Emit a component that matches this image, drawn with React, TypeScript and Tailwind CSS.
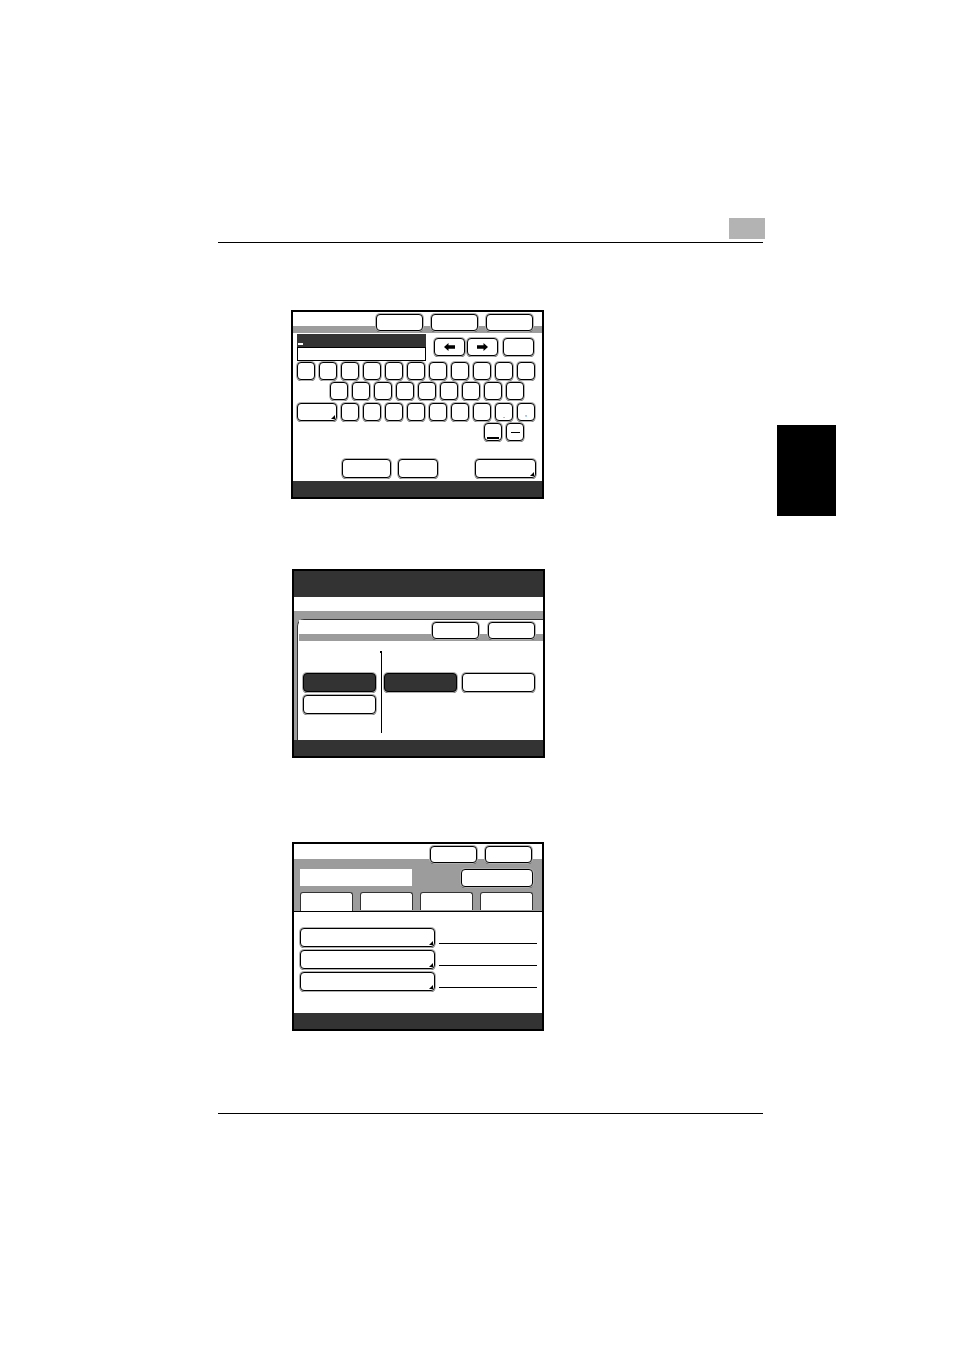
import React from "react";

type BtnProps = {
  className?: string;
  dark?: boolean;
  corner?: boolean;
  children?: React.ReactNode;
};

function Btn({ className = "", dark = false, corner = false, children }: BtnProps) {
  return (
    <div
      className={
        "relative flex shrink-0 items-center justify-center rounded-[4px] border border-black shadow-[0_1px_0_0_#000] ring-1 ring-[#b0b0b0] " +
        (dark ? "bg-[#333333] " : "bg-white ") +
        className
      }
    >
      {children}
      {corner && (
        <span className="absolute bottom-[1px] right-[1px] h-0 w-0 border-b-[4px] border-l-[4px] border-b-black border-l-transparent" />
      )}
    </div>
  );
}

function Key({ children, className = "w-[18px]" }: { children?: React.ReactNode; className?: string }) {
  return <Btn className={"h-[18px] " + className}>{children}</Btn>;
}

function Arrow({ dir }: { dir: "left" | "right" }) {
  return (
    <svg width="11" height="8" viewBox="0 0 11 8">
      {dir === "left" ? (
        <polygon points="0,4 4.5,0 4.5,2.2 11,2.2 11,5.8 4.5,5.8 4.5,8" fill="#000" />
      ) : (
        <polygon points="11,4 6.5,0 6.5,2.2 0,2.2 0,5.8 6.5,5.8 6.5,8" fill="#000" />
      )}
    </svg>
  );
}

function ScreenKeyboard() {
  return (
    <div className="ml-[291px] mt-[67px] flex h-[189px] w-[253px] flex-col border-2 border-black bg-white">
      <div className="flex h-[21px] items-start justify-end gap-[8px] bg-[linear-gradient(to_bottom,#ffffff_14px,#9c9c9c_14px)] pr-[9px] pt-[2px]">
        <Btn className="h-[17px] w-[47px]" />
        <Btn className="h-[17px] w-[47px]" />
        <Btn className="h-[17px] w-[47px]" />
      </div>
      <div className="mt-[1px] flex items-start">
        <div className="ml-[4px] flex w-[129px] flex-col">
          <div className="flex h-[13px] items-end bg-[#333333] pb-[2px] pl-[1px]">
            <div className="h-[2px] w-[5px] bg-white" />
          </div>
          <div className="h-[14px] border border-black bg-white" />
        </div>
        <div className="ml-[8px] mt-[4px] flex">
          <Btn className="h-[18px] w-[31px]">
            <Arrow dir="left" />
          </Btn>
          <Btn className="ml-[2px] h-[18px] w-[31px]">
            <Arrow dir="right" />
          </Btn>
          <Btn className="ml-[5px] h-[18px] w-[31px]" />
        </div>
      </div>
      <div className="mt-[1px] flex gap-[4px] pl-[4px]">
        {Array.from({ length: 11 }).map((_, i) => (
          <Key key={i} />
        ))}
      </div>
      <div className="mt-[2px] flex gap-[4px] pl-[37px]">
        {Array.from({ length: 9 }).map((_, i) => (
          <Key key={i} />
        ))}
      </div>
      <div className="mt-[3px] flex gap-[4px] pl-[4px]">
        <Btn className="h-[18px] w-[40px]" corner />
        {Array.from({ length: 7 }).map((_, i) => (
          <Key key={i} />
        ))}
        <Key>
          <span className="mt-[6px] font-['Liberation_Sans',sans-serif] text-[7px] leading-none">.</span>
        </Key>
        <Key>
          <span className="mt-[3px] font-['Liberation_Sans',sans-serif] text-[7px] leading-none">,</span>
        </Key>
      </div>
      <div className="mt-[2px] flex gap-[4px] pl-[191px]">
        <Key>
          <span className="mt-[12px] h-[2px] w-[12px] bg-black" />
        </Key>
        <Key>
          <span className="h-[1px] w-[9px] bg-black" />
        </Key>
      </div>
      <div className="mt-[18px] flex pl-[49px]">
        <Btn className="h-[19px] w-[49px]" />
        <Btn className="ml-[7px] h-[19px] w-[40px]" />
        <Btn className="ml-[37px] h-[19px] w-[61px]" corner />
      </div>
      <div className="mt-auto h-[16px] bg-[#333333]" />
    </div>
  );
}

function ScreenSelect() {
  return (
    <div className="ml-[292px] mt-[70px] flex h-[189px] w-[253px] flex-col border-2 border-black bg-white">
      <div className="h-[26px] bg-[#333333]" />
      <div className="h-[14px] bg-white" />
      <div className="flex flex-1 flex-col bg-[#9c9c9c] pl-[3px] pt-[8px]">
        <div className="flex flex-1 flex-col rounded-tl-[7px] border-l border-t border-[#333333] bg-white">
          <div className="ml-[1px] flex h-[21px] items-start justify-end gap-[9px] bg-[linear-gradient(to_bottom,#ffffff_14px,#9c9c9c_14px)] pr-[8px] pt-[2px]">
            <Btn className="h-[17px] w-[47px]" />
            <Btn className="h-[17px] w-[47px]" />
          </div>
          <div className="flex items-start">
            <div className="ml-[5px] mt-[32px] flex flex-col gap-[3px]">
              <Btn dark className="h-[19px] w-[73px]" />
              <Btn className="h-[19px] w-[73px]" />
            </div>
            <div className="ml-[4px] mt-[10px] flex flex-col items-center">
              <div className="h-[2px] w-[2px] bg-black" />
              <div className="h-[80px] w-[1px] bg-black" />
            </div>
            <div className="ml-[2px] mt-[32px] flex gap-[5px]">
              <Btn dark className="h-[19px] w-[73px]" />
              <Btn className="h-[19px] w-[73px]" />
            </div>
          </div>
        </div>
      </div>
      <div className="h-[16px] bg-[#333333]" />
    </div>
  );
}

function ScreenTabs() {
  return (
    <div className="ml-[292px] mt-[84px] flex h-[189px] w-[252px] flex-col border-2 border-black bg-white">
      <div className="flex h-[68px] flex-col border-b border-black bg-[linear-gradient(to_bottom,#ffffff_15px,#9c9c9c_15px)]">
        <div className="flex justify-end gap-[8px] pr-[10px] pt-[2px]">
          <Btn className="h-[17px] w-[47px]" />
          <Btn className="h-[17px] w-[47px]" />
        </div>
        <div className="mt-[6px] flex items-start pr-[9px]">
          <div className="ml-[6px] h-[17px] w-[112px] bg-white" />
          <Btn className="ml-auto h-[18px] w-[72px]" />
        </div>
        <div className="mt-[5px] flex gap-[7px] pl-[6px]">
          <div className="relative z-10 -mb-[1px] h-[19px] w-[53px] rounded-t-[3px] border-x border-t border-[#333333] bg-white" />
          <div className="h-[18px] w-[53px] rounded-t-[3px] border-x border-t border-[#333333] bg-white" />
          <div className="h-[18px] w-[53px] rounded-t-[3px] border-x border-t border-[#333333] bg-white" />
          <div className="h-[18px] w-[53px] rounded-t-[3px] border-x border-t border-[#333333] bg-white" />
        </div>
      </div>
      <div className="flex flex-1 flex-col gap-[3px] pl-[6px] pt-[16px]">
        {[0, 1, 2].map((i) => (
          <div key={i} className="flex items-end">
            <Btn className="h-[19px] w-[135px]" corner />
            <div className="mb-[3px] ml-[4px] h-[1px] w-[98px] bg-black" />
          </div>
        ))}
      </div>
      <div className="h-[16px] bg-[#333333]" />
    </div>
  );
}

export default function App() {
  return (
    <div className="relative h-[1350px] w-[954px] overflow-hidden bg-white">
      <div className="flex flex-col">
        <div className="ml-[218px] mt-[218px] flex w-[547px] flex-col">
          <div className="ml-auto h-[21px] w-[36px] bg-[#b3b3b3]" />
          <div className="mt-[3px] h-[1px] w-[545px] bg-black" />
        </div>
        <ScreenKeyboard />
        <ScreenSelect />
        <ScreenTabs />
        <div className="ml-[218px] mt-[82px] h-[1px] w-[545px] bg-black" />
      </div>
      <div className="absolute left-[777px] top-[425px] h-[91px] w-[59px] bg-black" />
    </div>
  );
}
